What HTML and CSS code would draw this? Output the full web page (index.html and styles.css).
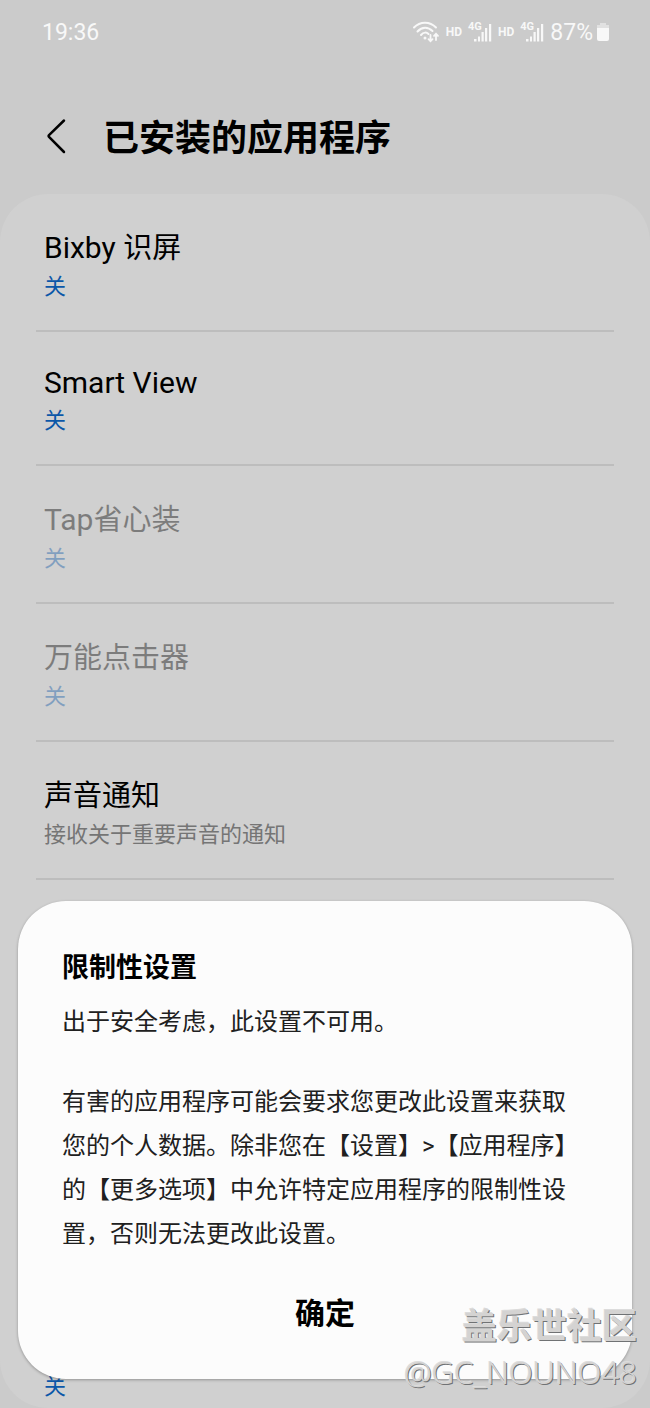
FILE: index.html
```html
<!DOCTYPE html>
<html lang="zh-CN">
<head>
<meta charset="utf-8">
<meta name="viewport" content="width=device-width, initial-scale=1">
<title>已安装的应用程序</title>
<link rel="stylesheet" href="styles.css">
</head>
<body>
<div class="screen">
  <div class="status">
    <span class="status-time">19:36</span>
    <div class="status-icons">
      <svg class="wifi" width="28" height="22" viewBox="0 0 28 22" fill="none" stroke="currentColor" stroke-width="2" stroke-linecap="round">
        <path d="M2 6.500C8 0 18 0 24 6.500M5.500 10.500C10 5.500 16 5.500 20.500 10M9 14C11.500 11 14.500 11 16.500 13"/>
        <circle cx="13" cy="17" r="1.500" fill="currentColor" stroke="none"/>
        <path d="M18.500 14v6M16.500 18.200l2 2 2-2M24 19v-6M22 14.800l2-2 2 2" stroke-width="1.800"/>
      </svg>
      <span class="hd">HD</span>
      <span class="signal"><span class="net">4G</span>
        <svg width="24" height="22" viewBox="0 0 24 22" fill="currentColor"><path d="M6 18h2.500v2.500H6zM10 15.500h2v5h-2zM13.500 11h2.200v9.500h-2.200zM17 7h2.200v13.500H17zM21 3h2.200v17.500H21z"/></svg>
      </span>
      <span class="hd">HD</span>
      <span class="signal"><span class="net">4G</span>
        <svg width="24" height="22" viewBox="0 0 24 22" fill="currentColor"><path d="M6 18h2.500v2.500H6zM10 15.500h2v5h-2zM13.500 11h2.200v9.500h-2.200zM17 7h2.200v13.500H17zM21 3h2.200v17.500H21z"/></svg>
      </span>
      <span class="percent">87%</span>
      <svg class="battery" width="14" height="20" viewBox="0 0 14 20" fill="currentColor"><path opacity=".5" d="M4 1h6v2h3v4H1V3h3z"/><path d="M1 6h12v11q0 2-2 2H3q-2 0-2-2z"/></svg>
    </div>
  </div>

  <header class="header">
    <button class="back" type="button" aria-label="返回">
      <svg width="22" height="36" viewBox="0 0 22 36" fill="none" stroke="currentColor" stroke-width="2.500" stroke-linecap="round" stroke-linejoin="round"><path d="M18 2.500L3 17.200Q2.200 18 3 18.800L18 34"/></svg>
    </button>
    <h1 class="title">已安装的应用程序</h1>
  </header>

  <main class="card">
    <ul class="list">
      <li class="item"><button class="row" type="button"><span class="name"><span class="latin">Bixby </span>识屏</span><span class="state">关</span></button></li>
      <li class="item"><button class="row" type="button"><span class="name name-short"><span class="latin">Smart View</span></span><span class="state">关</span></button></li>
      <li class="item"><button class="row" type="button" disabled><span class="name"><span class="latin">Tap</span>省心装</span><span class="state">关</span></button></li>
      <li class="item"><button class="row" type="button" disabled><span class="name">万能点击器</span><span class="state">关</span></button></li>
      <li class="item"><button class="row" type="button"><span class="name">声音通知</span><span class="note">接收关于重要声音的通知</span></button></li>
      <li class="item item-covered"></li>
      <li class="item item-covered"></li>
      <li class="item item-covered"></li>
      <li class="item"><button class="row" type="button"><span class="name"></span><span class="state">关</span></button></li>
    </ul>
  </main>

  <section class="dialog" role="dialog" aria-modal="true" aria-labelledby="dialog-title">
    <h2 class="dialog-title" id="dialog-title">限制性设置</h2>
    <p class="dialog-text">出于安全考虑，此设置不可用。</p>
    <p class="dialog-text">有害的应用程序可能会要求您更改此设置来获取您的个人数据。除非您在【设置】&gt;【应用程序】的【更多选项】中允许特定应用程序的限制性设置，否则无法更改此设置。</p>
    <button class="confirm" type="button">确定</button>
  </section>

  <div class="watermark">
    <span class="mark-site">盖乐世社区</span>
    <span class="mark-user">@GC_NOUNO48</span>
  </div>
</div>
</body>
</html>
```
FILE: styles.css
```css
* {
  box-sizing: border-box;
}

body {
  margin: 0;
  background: #cbcbcb;
  color: #000;
  font-family: Roboto, "Noto Sans CJK SC", sans-serif;
}

button {
  border: 0;
  padding: 0;
  background: none;
  color: inherit;
  font: inherit;
  text-align: left;
}

.screen {
  position: relative;
  min-height: 100vh;
}

.status {
  display: flex;
  align-items: center;
  justify-content: space-between;
  height: 64px;
  padding: 0 40px 0 42px;
  color: #f8f8f8;
  font-size: 23px;
}

.status-icons {
  display: flex;
  align-items: center;
}

.hd {
  margin: 0 6px;
  font-size: 12px;
  font-weight: 700;
}

.signal {
  position: relative;
  display: flex;
}

.net {
  position: absolute;
  top: 0;
  left: 0;
  font-size: 11px;
  line-height: 11px;
  font-weight: 700;
}

.percent {
  margin: 0 3px 0 6px;
}

.header {
  display: flex;
  align-items: center;
  height: 130px;
  padding: 14px 46px 0;
}

.back {
  display: flex;
  width: 57px;
}

.title {
  margin: 0;
  padding-top: 6px;
  font-size: 36px;
  line-height: 52px;
  font-weight: 700;
}

.card {
  border-radius: 48px;
  background: #d0d0d0;
}

.list {
  margin: 0;
  padding: 0 36px;
  list-style: none;
}

.item {
  border-bottom: 2px solid #bdbdbd;
}

.item:last-child {
  border-bottom: 0;
}

.item-covered {
  height: 138px;
}

.row {
  display: flex;
  flex-direction: column;
  width: 100%;
  padding: 33px 8px 25px;
}

.item:last-child .row {
  padding-bottom: 3px;
}

.row:disabled {
  opacity: 0.4;
}

.name {
  height: 42px;
  font-size: 29px;
  line-height: 42px;
}

.name-short {
  height: 38px;
  line-height: 36px;
}

.latin {
  font-size: 30px;
  white-space: pre;
}

.state,
.note {
  font-size: 22px;
  line-height: 36px;
}

.state {
  color: #0b57a8;
}

.note {
  color: #757575;
}

.dialog {
  position: absolute;
  right: 18px;
  bottom: 29px;
  left: 18px;
  display: flex;
  flex-direction: column;
  padding: 45px 44px 43px;
  border-radius: 48px;
  background: #fcfcfc;
  box-shadow: 0 1px 3px rgba(0, 0, 0, 0.3);
}

.dialog-title {
  margin: 0 0 10px;
  font-size: 27px;
  line-height: 44px;
  font-weight: 700;
}

.dialog-text {
  margin: 0 0 36px;
  color: #202020;
  font-size: 24px;
  line-height: 44px;
}

.confirm {
  align-self: center;
  font-size: 30px;
  line-height: 44px;
  font-weight: 700;
}

.watermark {
  position: absolute;
  right: 13px;
  bottom: 14px;
  display: flex;
  flex-direction: column;
  align-items: flex-end;
  color: #d4d3d2;
  text-shadow: 1px 1px 0 #707274, -1px -1px 0 #dcdcdc;
  pointer-events: none;
}

.mark-site {
  font-size: 35px;
  line-height: 44px;
  font-weight: 700;
}

.mark-user {
  font-family: "Noto Sans", sans-serif;
  font-size: 31px;
  line-height: 44px;
  font-weight: 300;
}
```
